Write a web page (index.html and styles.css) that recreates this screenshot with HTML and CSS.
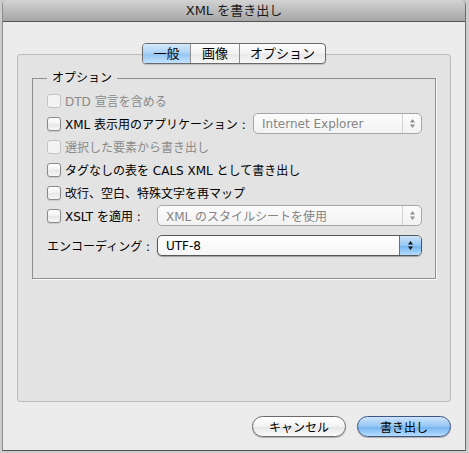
FILE: index.html
```html
<!DOCTYPE html>
<html lang="ja">
<head>
<meta charset="utf-8">
<title>XML を書き出し</title>
<link rel="stylesheet" href="styles.css">
</head>
<body>
<div class="window">
  <div class="titlebar">XML を書き出し</div>
  <div class="content">
    <div class="tabview">
      <div class="tabs">
        <span class="tab tab-general selected">一般</span>
        <span class="tab tab-image">画像</span>
        <span class="tab tab-options">オプション</span>
      </div>
      <fieldset class="group">
        <legend>オプション</legend>
        <div class="row disabled">
          <span class="cb"></span><span class="label">DTD 宣言を含める</span>
        </div>
        <div class="row">
          <span class="cb"></span><span class="label">XML 表示用のアプリケーション :</span>
          <div class="popup disabled popup-app">
            <span class="val">Internet Explorer</span>
            <span class="arrows"><svg width="7" height="11" viewBox="0 0 7 11"><path d="M3.5 1 L6 4.5 H1 Z M1 6.5 H6 L3.5 10 Z"/></svg></span>
          </div>
        </div>
        <div class="row disabled">
          <span class="cb"></span><span class="label">選択した要素から書き出し</span>
        </div>
        <div class="row">
          <span class="cb"></span><span class="label">タグなしの表を CALS XML として書き出し</span>
        </div>
        <div class="row">
          <span class="cb"></span><span class="label">改行、空白、特殊文字を再マップ</span>
        </div>
        <div class="row">
          <span class="cb"></span><span class="label">XSLT を適用 :</span>
          <div class="popup disabled popup-wide">
            <span class="val">XML のスタイルシートを使用</span>
            <span class="arrows"><svg width="7" height="11" viewBox="0 0 7 11"><path d="M3.5 1 L6 4.5 H1 Z M1 6.5 H6 L3.5 10 Z"/></svg></span>
          </div>
        </div>
        <div class="row row-encoding">
          <span class="label">エンコーディング :</span>
          <div class="popup active popup-wide">
            <span class="val">UTF-8</span>
            <span class="arrows"><svg width="7" height="11" viewBox="0 0 7 11"><path d="M3.5 1 L6 4.5 H1 Z M1 6.5 H6 L3.5 10 Z"/></svg></span>
          </div>
        </div>
      </fieldset>
    </div>
    <div class="buttons">
      <button class="btn">キャンセル</button>
      <button class="btn default">書き出し</button>
    </div>
  </div>
</div>
</body>
</html>
```
FILE: styles.css
```css
html, body {
  margin: 0;
  padding: 0;
}

body {
  width: 469px;
  height: 453px;
  overflow: hidden;
  background: #cdcdcd;
  font-family: "DejaVu Sans", "Noto Sans CJK JP", sans-serif;
  font-size: 12px;
  color: #000;
}

/* sheet window */
.window {
  margin-left: 2px;
  width: 464px;
  height: 451px;
  box-sizing: border-box;
  border-left: 1px solid #8d8d8d;
  border-right: 1px solid #6d6d6d;
  border-bottom: 1px solid #4f4f4f;
  border-radius: 5px 5px 0 0;
  overflow: hidden;
  background: #ececec;
  display: flex;
  flex-direction: column;
}

.titlebar {
  flex: none;
  height: 21px;
  border-bottom: 1px solid #525252;
  background: linear-gradient(#d3d3d3, #a6a6a6);
  text-align: center;
  line-height: 22px;
  font-size: 13px;
  color: #1b1b1b;
}

.content {
  flex: 1;
  padding: 32px 14px 0;
  display: flex;
  flex-direction: column;
}

/* tab view */
.tabview {
  height: 348px;
  box-sizing: border-box;
  border: 1px solid #bcbcbc;
  border-radius: 3px;
  background: #e3e3e3;
  display: flex;
  flex-direction: column;
}

.tabs {
  align-self: center;
  margin-top: -12px;
  display: flex;
  height: 21px;
  box-sizing: border-box;
  border: 1px solid #6a6a6a;
  border-radius: 4px;
  overflow: hidden;
  background: linear-gradient(#fdfdfd, #f1f1f1 50%, #e7e7e7 51%, #f6f6f6);
  box-shadow: 0 1px 1px rgba(0, 0, 0, 0.15);
  font-size: 13px;
}

.tab {
  display: flex;
  align-items: center;
  justify-content: center;
  box-sizing: border-box;
  line-height: 1;
}

.tab + .tab {
  border-left: 1px solid #8e8e8e;
}

.tab-general { width: 47px; }
.tab-image { width: 49px; }
.tab-options { width: 86px; }

.tab.selected {
  background: linear-gradient(#d6e9fb, #a9d0f4 50%, #91c4f1 51%, #c2e2ff);
}

/* group box */
.group {
  margin: 6px 14px 0;
  padding: 3px 13px 21px 14px;
  border: 1px solid #8f8f8f;
  box-shadow: 1px 1px 0 #fafafa;
  min-inline-size: 0;
}

.group legend {
  padding: 0 5px;
  line-height: 16px;
}

.row {
  display: flex;
  align-items: center;
  height: 23px;
}

.row.disabled .label {
  color: #8a8a8a;
}

.cb {
  flex: none;
  width: 14px;
  height: 14px;
  box-sizing: border-box;
  margin-right: 4px;
  border: 1px solid #8a8a8a;
  border-radius: 3px;
  background: linear-gradient(#ffffff, #f1f1f1 50%, #e6e6e6 51%, #f7f7f7);
  box-shadow: 0 1px 1px rgba(0, 0, 0, 0.12);
}

.row.disabled .cb {
  border-color: #c3c3c3;
  background: #f3f3f3;
  box-shadow: none;
}

.row-encoding {
  margin-top: 7px;
}

/* pop-up menus */
.popup {
  margin-left: auto;
  display: flex;
  height: 21px;
  box-sizing: border-box;
  border: 1px solid #a5a5a5;
  border-radius: 5px;
  background: linear-gradient(#fcfcfc, #f2f2f2);
  overflow: hidden;
}

.popup-app { width: 169px; }
.popup-wide { width: 265px; }

.popup .val {
  flex: 1;
  padding-left: 8px;
  display: flex;
  align-items: center;
}

.popup .arrows {
  flex: none;
  width: 18px;
  display: flex;
  align-items: center;
  justify-content: center;
  border-left: 1px solid #d2d2d2;
}

.popup.disabled .val {
  color: #858585;
}

.popup.disabled .arrows svg {
  fill: #8f8f8f;
}

.popup.active {
  border-color: #565656;
  background: linear-gradient(#ffffff, #f5f5f5);
  box-shadow: 0 1px 1px rgba(0, 0, 0, 0.3);
}

.popup.active .arrows {
  width: 21px;
  border-left: 1px solid #5c6f96;
  background: linear-gradient(#cde4fb, #94c6f3 50%, #71b2ee 51%, #b6ddff);
}

.popup.active .arrows svg {
  fill: #111;
}

/* dialog buttons */
.buttons {
  margin-top: 14px;
  display: flex;
  justify-content: flex-end;
  gap: 11px;
}

.btn {
  width: 94px;
  height: 21px;
  padding: 0;
  box-sizing: border-box;
  border: 1px solid #6b6b6b;
  border-radius: 11px;
  background: linear-gradient(#ffffff, #f2f2f2 50%, #e4e4e4 51%, #fbfbfb);
  box-shadow: 0 1px 1px rgba(0, 0, 0, 0.25);
  font-family: inherit;
  font-size: 12px;
  color: #000;
}

.btn.default {
  border-color: #3f5684;
  background: linear-gradient(#cde4fb, #94c6f3 50%, #71b2ee 51%, #b6ddff);
}
```
